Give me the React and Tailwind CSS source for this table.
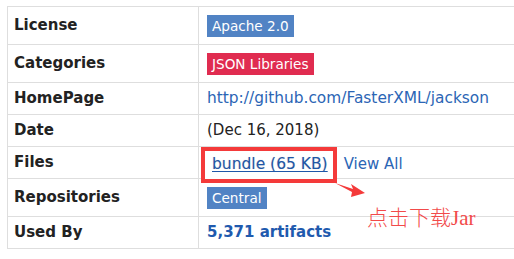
import React from "react";

const rows = [
    { label: "License", h: "h-[38px]", kind: "badge", text: "Apache 2.0", color: "bg-[#5183c4]" },
    { label: "Categories", h: "h-[38px]", kind: "badge", text: "JSON Libraries", color: "bg-[#e02c50]" },
    { label: "HomePage", h: "h-[32px]", kind: "link", text: "http://github.com/FasterXML/jackson" },
    { label: "Date", h: "h-[32px]", kind: "plain", text: "(Dec 16, 2018)" },
    { label: "Files", h: "h-[32px]", kind: "files" },
    { label: "Repositories", h: "h-[38px]", kind: "badge", text: "Central", color: "bg-[#5183c4]" },
    { label: "Used By", h: "h-[32px]", kind: "bold", text: "5,371 artifacts" },
];

const Cell = ({ row }) => {
    if (row.kind === "badge") {
        return (
            <span className={`${row.color} text-white text-[13.6px] px-[5px] h-[22px] leading-[22px] inline-block`}>
                {row.text}
            </span>
        );
    }
    if (row.kind === "link") return <span className="text-[#2b65b5] text-[15.4px]">{row.text}</span>;
    if (row.kind === "bold") return <span className="text-[#1f5aae] font-bold">{row.text}</span>;
    if (row.kind === "files") {
        return (
            <div className="flex items-start h-full">
                {/* red highlight box from the annotation, spills under the row */}
                <div className="-ml-[6px] h-[36px] border-[4px] border-[#f43a3a] bg-white flex items-start pt-[2px] pl-[7px] pr-[5px]">
                    <span className="text-[#1f57a8] text-[15.5px] underline underline-offset-2 decoration-1 [text-shadow:0_0_1px_#ccc]">
                        bundle (65 KB)
                    </span>
                </div>
                <span className="ml-[7px] mt-[6px] text-[#2b65b5]">View All</span>
            </div>
        );
    }
    return <span className="text-[#222]">{row.text}</span>;
};

export default function App() {
    return (
        <div className="relative w-[514px] h-[259px] bg-white overflow-hidden pt-[6px] pl-[7px] font-['DejaVu_Sans',sans-serif] text-[15px]">
            <div className="border-t border-l border-[#dedede]">
                {rows.map((row) => (
                    <div key={row.label} className={`flex ${row.h} border-b border-[#dedede]`}>
                        <div className="w-[191px] shrink-0 border-r border-[#dedede] flex items-center pl-[6px] font-bold text-[#222]">
                            {row.label}
                        </div>
                        <div className={`flex-1 flex pl-[8px] whitespace-nowrap ${row.kind === "files" ? "items-start relative z-10" : "items-center"}`}>
                            <Cell row={row} />
                        </div>
                    </div>
                ))}
            </div>

            {/* annotation arrow */}
            <svg className="absolute left-[333px] top-[180px]" width="36" height="20" viewBox="0 0 36 20">
                <path d="M2 3 L20 9 L18 4 L32 13 L18 17 L19 12 Z" fill="#f43a3a" />
            </svg>
            <div className="absolute left-[367px] top-[204px] text-[21px] leading-[28px] text-[#f24a4a] font-['Liberation_Serif','Noto_Sans_CJK_SC',serif] font-light">
                点击下载Jar
            </div>
        </div>
    );
}
